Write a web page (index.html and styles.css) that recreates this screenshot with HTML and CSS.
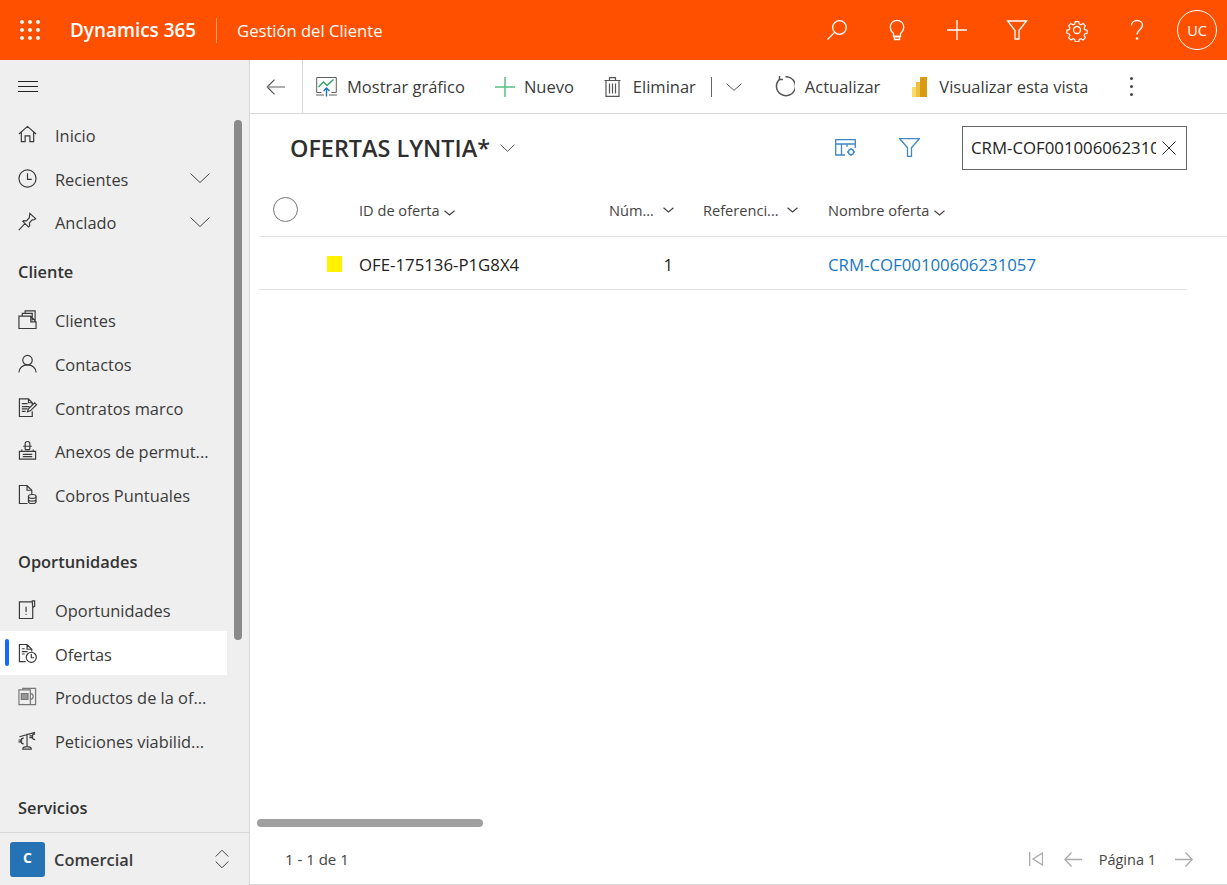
FILE: index.html
```html
<!DOCTYPE html>
<html lang="es">
<head>
    <meta charset="UTF-8">
    <title>Ofertas Lyntia</title>
    <link rel="stylesheet" href="styles.css">
</head>
<body>
    <header class="topbar">
        <svg class="waffle" width="20" height="20" viewBox="0 0 20 20" fill="#fff">
            <circle cx="2" cy="2" r="1.9"/><circle cx="10" cy="2" r="1.9"/><circle cx="18" cy="2" r="1.9"/>
            <circle cx="2" cy="10" r="1.9"/><circle cx="10" cy="10" r="1.9"/><circle cx="18" cy="10" r="1.9"/>
            <circle cx="2" cy="18" r="1.9"/><circle cx="10" cy="18" r="1.9"/><circle cx="18" cy="18" r="1.9"/>
        </svg>
        <span class="brand">Dynamics 365</span>
        <span class="app-name">Gestión del Cliente</span>
        <div class="top-actions">
            <svg class="top-icon" viewBox="0 0 24 24"><circle cx="14.5" cy="9.5" r="6.8"/><path d="M9.6 14.4 2.5 21.5"/></svg>
            <svg class="top-icon" viewBox="0 0 24 24"><path d="M8.5 18.5v-3C7 14 5.2 12.3 5.2 9.2a6.8 6.8 0 0 1 13.6 0c0 3.1-1.800 4.800-3.300 6.300v3z"/><path d="M9.500 21.500h5v-3h-5z"/></svg>
            <svg class="top-icon" viewBox="0 0 24 24"><path d="M12 2v20M2 12h20"/></svg>
            <svg class="top-icon" viewBox="0 0 24 24"><path d="M2.500 3h19l-7.500 9.500v8.500h-4v-8.500z"/></svg>
            <svg class="top-icon" viewBox="0 0 24 24"><circle cx="12" cy="12" r="3.500"/><path d="M10 2.500h4l.6 2.800 1.900.8 2.400-1.500 2.600 2.800-1.500 2.300.8 1.900 2.700.6v3.600l-2.700.6-.8 1.900 1.500 2.300-2.600 2.800-2.400-1.500-1.900.8-.6 2.800h-4l-.6-2.800-1.900-.8-2.400 1.500-2.600-2.800 1.500-2.300-.8-1.900-2.700-.6v-3.600l2.700-.6.8-1.900-1.500-2.300 2.600-2.800 2.400 1.500 1.900-.8z" transform="translate(1.400 1.400) scale(.883)"/></svg>
            <svg class="top-icon" viewBox="0 0 24 24"><path d="M6.500 7.500C6.500 4.500 9 2.500 12 2.500s5.500 2 5.500 4.800c0 4.200-5.500 4.700-5.500 9.200"/><circle cx="12" cy="20.500" r=".7"/></svg>
            <div class="avatar">UC</div>
        </div>
    </header>

    <div class="layout">
        <nav class="sidebar">
            <div class="side-scroll">
                <div class="burger"><span></span><span></span><span></span></div>

                <a class="nav-item"><svg class="nav-icon" viewBox="0 0 20 20"><path d="M1 9.500 10 1.500l9 8M3.500 7.500v10h4v-6h5v6h4v-10"/></svg><span>Inicio</span></a>
                <a class="nav-item"><svg class="nav-icon" viewBox="0 0 20 20"><circle cx="10" cy="10" r="9"/><path d="M10 4.500V11h4.500"/></svg><span>Recientes</span><svg class="nav-chevron" viewBox="0 0 20 10"><path d="M.5.500 10 9.500 19.500.500"/></svg></a>
                <a class="nav-item"><svg class="nav-icon" viewBox="0 0 20 20"><path d="M12.500 1.500l6 5.500-1.500 1-2 .2-3 3.300.3 3-1.300 1.300-6-6L6 9l3 .3 3-3.300.2-2.500zM7.500 12 .8 19"/></svg><span>Anclado</span><svg class="nav-chevron" viewBox="0 0 20 10"><path d="M.5.500 10 9.500 19.500.500"/></svg></a>

                <h3 class="nav-heading">Cliente</h3>
                <a class="nav-item"><svg class="nav-icon" viewBox="0 0 20 20"><path d="M1 6.500v13h18v-7l-5.500-6zM13.500 6.500v6H19M4.500 6V3.500H15V11M7.500 3.500V1h10.500v11"/></svg><span>Clientes</span></a>
                <a class="nav-item"><svg class="nav-icon" viewBox="0 0 20 20"><circle cx="10" cy="6.500" r="5"/><path d="M1 19.500c0-5 4-8 9-8s9 3 9 8"/></svg><span>Contactos</span></a>
                <a class="nav-item"><svg class="nav-icon" viewBox="0 0 20 20"><path d="M15 8V5l-4-4H1.500v18.500H15V14M11 1v4h4M4 6h6M4 9h8M4 11.500h6M4 14h4M10 14.500l1-3 6.500-6.500 2 2-6.500 6.500z"/></svg><span>Contratos marco</span></a>
                <a class="nav-item"><svg class="nav-icon" viewBox="0 0 20 20"><path d="M7.500 9V3a2.500 2.500 0 0 1 5 0v6M5.500 5.500h9M7.500 9h5M4 9v2M16 9v2M1.500 11h17v8h-17zM5 14h10M5 16.500h10"/></svg><span>Anexos de permut...</span></a>
                <a class="nav-item"><svg class="nav-icon" viewBox="0 0 20 20"><path d="M10 19.500H1.500V.500h8l5 5v4M9.500.500v5h5"/><ellipse cx="15" cy="12" rx="4" ry="2"/><path d="M11 12v5.500c0 1.100 1.800 2 4 2s4-.9 4-2V12M11 15c0 1.100 1.800 2 4 2s4-.9 4-2"/></svg><span>Cobros Puntuales</span></a>

                <h3 class="nav-heading nav-heading-gap">Oportunidades</h3>
                <a class="nav-item"><svg class="nav-icon" viewBox="0 0 20 20"><path d="M14.500 2H1.500v17.500h14V8M15 1h2.500v5.500L15.500 8zM8.500 7v5.500M8.500 14.500v1"/></svg><span>Oportunidades</span></a>
                <a class="nav-item is-active"><svg class="nav-icon" viewBox="0 0 20 20"><path d="M8 18.500H1.500V.500h8l5 5v2.500M9.500.500v5h5M4 5h3M4 8h6M4 10.500h3"/><circle cx="14" cy="14" r="5.300"/><path d="M14 10.500V14.500h3"/></svg><span>Ofertas</span></a>
                <a class="nav-item"><svg class="nav-icon icon-soft" viewBox="0 0 20 20"><path d="M5 2.500v-1h13.500v17H5v-1M1 3h12v15.500H1zM13 7a3 3 0 0 1 0 6"/><path class="bars" d="M3.500 7h7v6h-7z"/></svg><span>Productos de la of...</span></a>
                <a class="nav-item"><svg class="nav-icon" viewBox="0 0 20 20"><path d="M9.500 3v14M5 19h9c0-1.500-2-2.500-4.500-2.500S5 17.500 5 19zM1.500 6 18 1.500M6 7.500a3 3 0 1 0 0 6M.5 9.500h4M.5 11.500h4M18 3a2.800 2.800 0 1 0 0 6M12 5.200h4M12 6.900h4"/></svg><span>Peticiones viabilid...</span></a>

                <h3 class="nav-heading nav-heading-gap">Servicios</h3>
            </div>
            <div class="side-thumb"></div>
            <div class="area-switch">
                <div class="area-tile">C</div>
                <span class="area-name">Comercial</span>
                <svg class="area-arrows" width="14" height="20" viewBox="0 0 14 20"><path d="M.7 7.500 7 1.200l6.300 6.300M.7 12.500 7 18.800l6.300-6.300"/></svg>
            </div>
        </nav>

        <main class="content">
            <div class="toolbar">
                <div class="back-btn">
                    <svg width="20" height="16" viewBox="0 0 20 16" class="line-icon"><path d="M8.500.7 1.200 8l7.300 7.300"/><path class="arrow-shaft" d="M1.200 8H19"/></svg>
                </div>
                <div class="tool-btn">
                    <svg width="21" height="21" viewBox="0 0 21 21" fill="none"><path d="M5.500 16.500H.7V1.500h19.600v15h-4.800M0 19h8M13 19h8" stroke="#5f5f5f"/><path d="M2.500 11 7.500 6l3.500 3.500 6.500-6" stroke="#2fa35f" stroke-width="1.300"/><path d="M10.500 20.500v-8M7.500 15l3-3 3 3" stroke="#1f72c0" stroke-width="1.400"/></svg>
                    <span>Mostrar gráfico</span>
                </div>
                <div class="tool-btn tool-tight">
                    <svg width="20" height="20" viewBox="0 0 20 20"><path d="M10 0v20M0 10h20" stroke="#5abf85" stroke-width="1.500"/></svg>
                    <span>Nuevo</span>
                </div>
                <div class="tool-btn tool-wide">
                    <svg width="17" height="20" viewBox="0 0 17 20" class="line-icon"><path d="M.5 3.500h16M5.500 3.500v-2.800h6v2.800M2 3.500v15.800h13V3.500M5.500 6.500v10M8.500 6.500v10M11.500 6.500v10"/></svg>
                    <span>Eliminar</span>
                </div>
                <div class="tool-sep"></div>
                <svg class="tool-more" width="16" height="8" viewBox="0 0 16 8"><path d="M.5.700 8 7.300 15.500.700"/></svg>
                <div class="tool-btn">
                    <svg width="21" height="21" viewBox="0 0 21 21" class="line-icon refresh"><path d="M6 2.800a9.500 9.500 0 1 0 5.500-2.100"/><path d="M5.500 0v3.500H9"/></svg>
                    <span>Actualizar</span>
                </div>
                <div class="tool-btn tool-wide tool-report">
                    <svg width="15" height="20" viewBox="0 0 15 20"><rect x="0" y="10" width="7" height="10" fill="#f8dc6b"/><rect x="4" y="5" width="7" height="15" fill="#efc040"/><rect x="8" y="0" width="7" height="20" fill="#d99a10"/></svg>
                    <span>Visualizar esta vista</span>
                </div>
                <div class="tool-dots"><i></i><i></i><i></i></div>
            </div>

            <div class="view-head">
                <h1 class="view-title">OFERTAS LYNTIA*</h1>
                <svg class="title-chevron" width="15" height="8" viewBox="0 0 15 8"><path d="M.5.700l7 6.600 7-6.600"/></svg>
                <div class="view-tools">
                    <svg width="21" height="17" viewBox="0 0 21 17" class="blue-icon"><path d="M10 16H.7V.7h19.600V9M.7 5h19.600M6.500 5v11M12 5v3"/><circle cx="16" cy="13" r="2.600"/><path d="M16 9v1.400M16 15.600V17M12 13h1.400M18.600 13H20"/></svg>
                    <svg width="21" height="19" viewBox="0 0 21 19" class="blue-icon"><path d="M.7.700h19.600l-7.800 9v8.600h-4V9.700z"/></svg>
                    <div class="search-box">
                        <span class="search-text">CRM-COF00100606231057</span>
                        <svg width="14" height="14" viewBox="0 0 14 14"><path d="M.5.500l13 13M13.500.500l-13 13" stroke="#333"/></svg>
                    </div>
                </div>
            </div>

            <div class="grid-wrap">
                <div class="grid-row grid-head">
                    <div class="select-cell"><span class="select-circle"></span></div>
                    <div class="col-id">ID de oferta <svg class="sort" width="11" height="6" viewBox="0 0 11 6"><path d="M.5.700l5 4.300 5-4.300"/></svg></div>
                    <div class="col-num"><span>Núm...</span><svg class="sort" width="11" height="6" viewBox="0 0 11 6"><path d="M.5.700l5 4.300 5-4.300"/></svg></div>
                    <div class="col-ref"><span>Referenci...</span><svg class="sort" width="11" height="6" viewBox="0 0 11 6"><path d="M.5.700l5 4.300 5-4.300"/></svg></div>
                    <div class="col-name">Nombre oferta <svg class="sort" width="11" height="6" viewBox="0 0 11 6"><path d="M.5.700l5 4.300 5-4.300"/></svg></div>
                </div>
                <div class="grid-row grid-data">
                    <div class="select-cell"><span class="status-dot"></span></div>
                    <div class="col-id">OFE-175136-P1G8X4</div>
                    <div class="col-num num-value">1</div>
                    <div class="col-ref"></div>
                    <div class="col-name"><a class="record-link">CRM-COF00100606231057</a></div>
                </div>
            </div>

            <div class="h-scroll"><div class="h-thumb"></div></div>

            <footer class="pager">
                <span class="pager-count">1 - 1 de 1</span>
                <div class="pager-nav">
                    <svg width="14" height="14" viewBox="0 0 14 14" class="pager-icon pager-first"><path d="M.7 0v14M13.500 1 4 7l9.500 6z"/></svg>
                    <svg width="18" height="15" viewBox="0 0 18 15" class="pager-icon"><path d="M7.500.5.800 7.500l6.700 7M.8 7.500H18"/></svg>
                    <span class="page-label">Página 1</span>
                    <svg width="18" height="15" viewBox="0 0 18 15" class="pager-icon"><path d="M10.500.5l6.700 7-6.700 7M17.200 7.500H0"/></svg>
                </div>
            </footer>
        </main>
    </div>
</body>
</html>
```

FILE: styles.css
```css
* {
    box-sizing: border-box;
}
html, body {
    height: 100%;
}
body {
    margin: 0;
    font-family: "Open Sans", "Noto Sans", Arial, sans-serif;
    font-size: 16.4px;
    color: #333;
    background: #fff;
    overflow: hidden;
    display: flex;
    flex-direction: column;
}

/* top bar */
.topbar {
    height: 60px;
    flex: none;
    background: #ff5000;
    color: #fff;
    display: flex;
    align-items: center;
    padding-left: 20px;
}
.waffle {
    flex: none;
}
.brand {
    margin-left: 30px;
    font-size: 18.9px;
    font-weight: 600;
    padding-right: 20px;
    border-right: 1px solid #ff9a66;
    line-height: 25px;
}
.app-name {
    margin-left: 20px;
    font-size: 16.6px;
}
.top-actions {
    margin-left: auto;
    display: flex;
    align-items: center;
    gap: 36px;
    padding-right: 10px;
}
.top-icon {
    width: 24px;
    height: 24px;
    fill: none;
    stroke: #fff;
    stroke-width: 1.3;
}
.avatar {
    width: 40px;
    height: 40px;
    margin-left: -8px;
    border: 1px solid #fff;
    border-radius: 50%;
    display: flex;
    align-items: center;
    justify-content: center;
    font-size: 14.5px;
}

.layout {
    flex: 1;
    min-height: 0;
    display: flex;
}

/* sidebar */
.sidebar {
    width: 250px;
    flex: none;
    background: #efefef;
    border-right: 1px solid #d8d8d8;
    display: flex;
    flex-direction: column;
    position: relative;
}
.side-scroll {
    flex: 1;
    min-height: 0;
    overflow: hidden;
}
.burger {
    height: 52.5px;
    padding-left: 18px;
    display: flex;
    flex-direction: column;
    justify-content: center;
    gap: 4px;
}
.burger span {
    display: block;
    width: 20px;
    height: 1px;
    background: #222;
}
.nav-item {
    height: 43.75px;
    width: 227px;
    display: flex;
    align-items: center;
    padding-left: 18px;
    color: #3b3b3b;
    position: relative;
    white-space: nowrap;
}
.nav-item span {
    margin-left: 18px;
    padding-top: 2px;
}
.nav-icon {
    width: 19px;
    height: 19px;
    flex: none;
    fill: none;
    stroke: #3a3a3a;
    stroke-width: 1.25;
    overflow: visible;
}
.icon-soft {
    stroke: #777;
}
.icon-soft .bars {
    fill: #999;
}
.nav-chevron {
    width: 20px;
    height: 10px;
    position: absolute;
    left: 190px;
    top: 17px;
    fill: none;
    stroke: #444;
}
.is-active {
    background: #fff;
}
.is-active::before {
    content: "";
    position: absolute;
    left: 5px;
    top: 8px;
    width: 4px;
    height: 27px;
    background: #0f6cff;
    border-radius: 2px;
}
.nav-heading {
    margin: 0;
    height: 54px;
    padding: 18px 0 0 18px;
    font-size: 16.4px;
    line-height: 20px;
    font-weight: 600;
    color: #333;
}
.nav-heading-gap {
    height: 71px;
    padding-top: 35px;
}
.side-thumb {
    position: absolute;
    left: 234px;
    top: 60px;
    width: 8px;
    height: 520px;
    border-radius: 4px;
    background: #8a8a8a;
}
.area-switch {
    height: 53px;
    flex: none;
    border-top: 1px solid #d8d8d8;
    display: flex;
    align-items: center;
    padding-left: 10px;
}
.area-tile {
    width: 35px;
    height: 35px;
    border-radius: 3px;
    background: #2572b4;
    color: #fff;
    font-size: 14px;
    font-weight: 700;
    display: flex;
    align-items: center;
    justify-content: center;
    padding-bottom: 4px;
}
.area-name {
    margin-left: 9px;
    font-weight: 600;
    color: #3b3b3b;
}
.area-arrows {
    margin-left: auto;
    margin-right: 20px;
    fill: none;
    stroke: #444;
}

/* main */
.content {
    flex: 1;
    min-width: 0;
    display: flex;
    flex-direction: column;
    border-bottom: 1px solid #d8d8d8;
}
.toolbar {
    height: 54px;
    flex: none;
    display: flex;
    align-items: center;
    border-bottom: 1px solid #d8d8d8;
    color: #3b3b3b;
    font-size: 16.5px;
}
.line-icon {
    fill: none;
    stroke: #555;
    stroke-width: 1.2;
    flex: none;
}
.refresh {
    stroke-width: 1.5;
}
.arrow-shaft {
    stroke: #8a8a8a;
    stroke-width: 1.4;
}
.back-btn {
    width: 53px;
    height: 53px;
    border-right: 1px solid #d8d8d8;
    display: flex;
    align-items: center;
    justify-content: center;
}
.tool-btn {
    display: flex;
    align-items: center;
    gap: 10px;
    margin-left: 13px;
    margin-right: 17px;
    white-space: nowrap;
}
.tool-tight {
    gap: 9px;
}
.tool-wide {
    gap: 12px;
}
.tool-report {
    margin-left: 15px;
}
.tool-sep {
    width: 1px;
    height: 20px;
    background: #666;
    margin-left: -2px;
}
.tool-more {
    margin-left: 14px;
    margin-right: 19px;
    fill: none;
    stroke: #555;
}
.tool-dots {
    margin-left: 24px;
    display: flex;
    flex-direction: column;
    gap: 5px;
}
.tool-dots i {
    display: block;
    width: 3px;
    height: 3px;
    border-radius: 50%;
    background: #444;
}
.view-head {
    height: 71px;
    flex: none;
    display: flex;
    align-items: center;
    padding: 0 40px 4px;
}
.view-title {
    margin: 0;
    font-size: 23.4px;
    font-weight: 600;
    color: #2f2f2f;
}
.title-chevron {
    margin-left: 10px;
    fill: none;
    stroke: #555;
}
.view-tools {
    margin-left: auto;
    display: flex;
    align-items: center;
    gap: 43px;
}
.blue-icon {
    fill: none;
    stroke: #3f87c6;
    stroke-width: 1.3;
}
.search-box {
    width: 225px;
    height: 44px;
    margin-left: -1px;
    border: 1px solid #666;
    display: flex;
    align-items: center;
    padding: 0 10px 0 8px;
    gap: 6px;
    font-size: 16.8px;
}
.search-text {
    width: 185px;
    overflow: hidden;
    white-space: nowrap;
    color: #222;
}

/* grid */
.grid-wrap {
    margin: 0 40px 0 9px;
    flex: 1;
    min-height: 0;
}
.grid-row {
    display: grid;
    grid-template-columns: 100px 250px 94px 125px 1fr;
    align-items: center;
}
.grid-head {
    height: 52px;
    margin-right: -40px;
    padding-bottom: 2px;
    font-size: 14.6px;
    color: #444;
    border-bottom: 1px solid #e2e2e2;
}
.grid-head svg {
    margin-left: 1px;
}
.grid-data {
    height: 53px;
    padding-top: 2px;
    border-bottom: 1px solid #e2e2e2;
    color: #222;
    font-size: 16.8px;
}
.select-cell {
    display: flex;
    align-items: center;
}
.select-circle {
    width: 25px;
    height: 25px;
    margin-left: 14px;
    border: 1px solid #777;
    border-radius: 50%;
}
.status-dot {
    width: 15px;
    height: 16px;
    margin-left: 68px;
    background: #fff200;
}
.col-num {
    display: flex;
    justify-content: space-between;
    align-items: center;
    padding-right: 29px;
}
.col-ref {
    display: flex;
    justify-content: space-between;
    align-items: center;
    padding-right: 30px;
}
.num-value {
    justify-content: flex-end;
    padding-right: 30px;
}
.sort {
    fill: none;
    stroke: #444;
    stroke-width: 1.2;
}
.record-link {
    color: #1777c4;
}
.h-scroll {
    height: 8px;
    flex: none;
    padding-left: 7px;
}
.h-thumb {
    width: 226px;
    height: 8px;
    border-radius: 4px;
    background: #a0a0a0;
}
.pager {
    height: 57px;
    flex: none;
    display: flex;
    align-items: center;
    justify-content: space-between;
    padding: 7px 34px 0 35px;
    font-size: 15px;
    color: #444;
}
.pager-nav {
    display: flex;
    align-items: center;
    gap: 20px;
}
.pager-icon {
    fill: none;
    stroke: #a9a9a9;
    stroke-width: 1.3;
}
.pager-first {
    margin-right: 1px;
}
.page-label {
    margin: 0 -1px 0 -3px;
    font-size: 14.5px;
    color: #444;
}
```
